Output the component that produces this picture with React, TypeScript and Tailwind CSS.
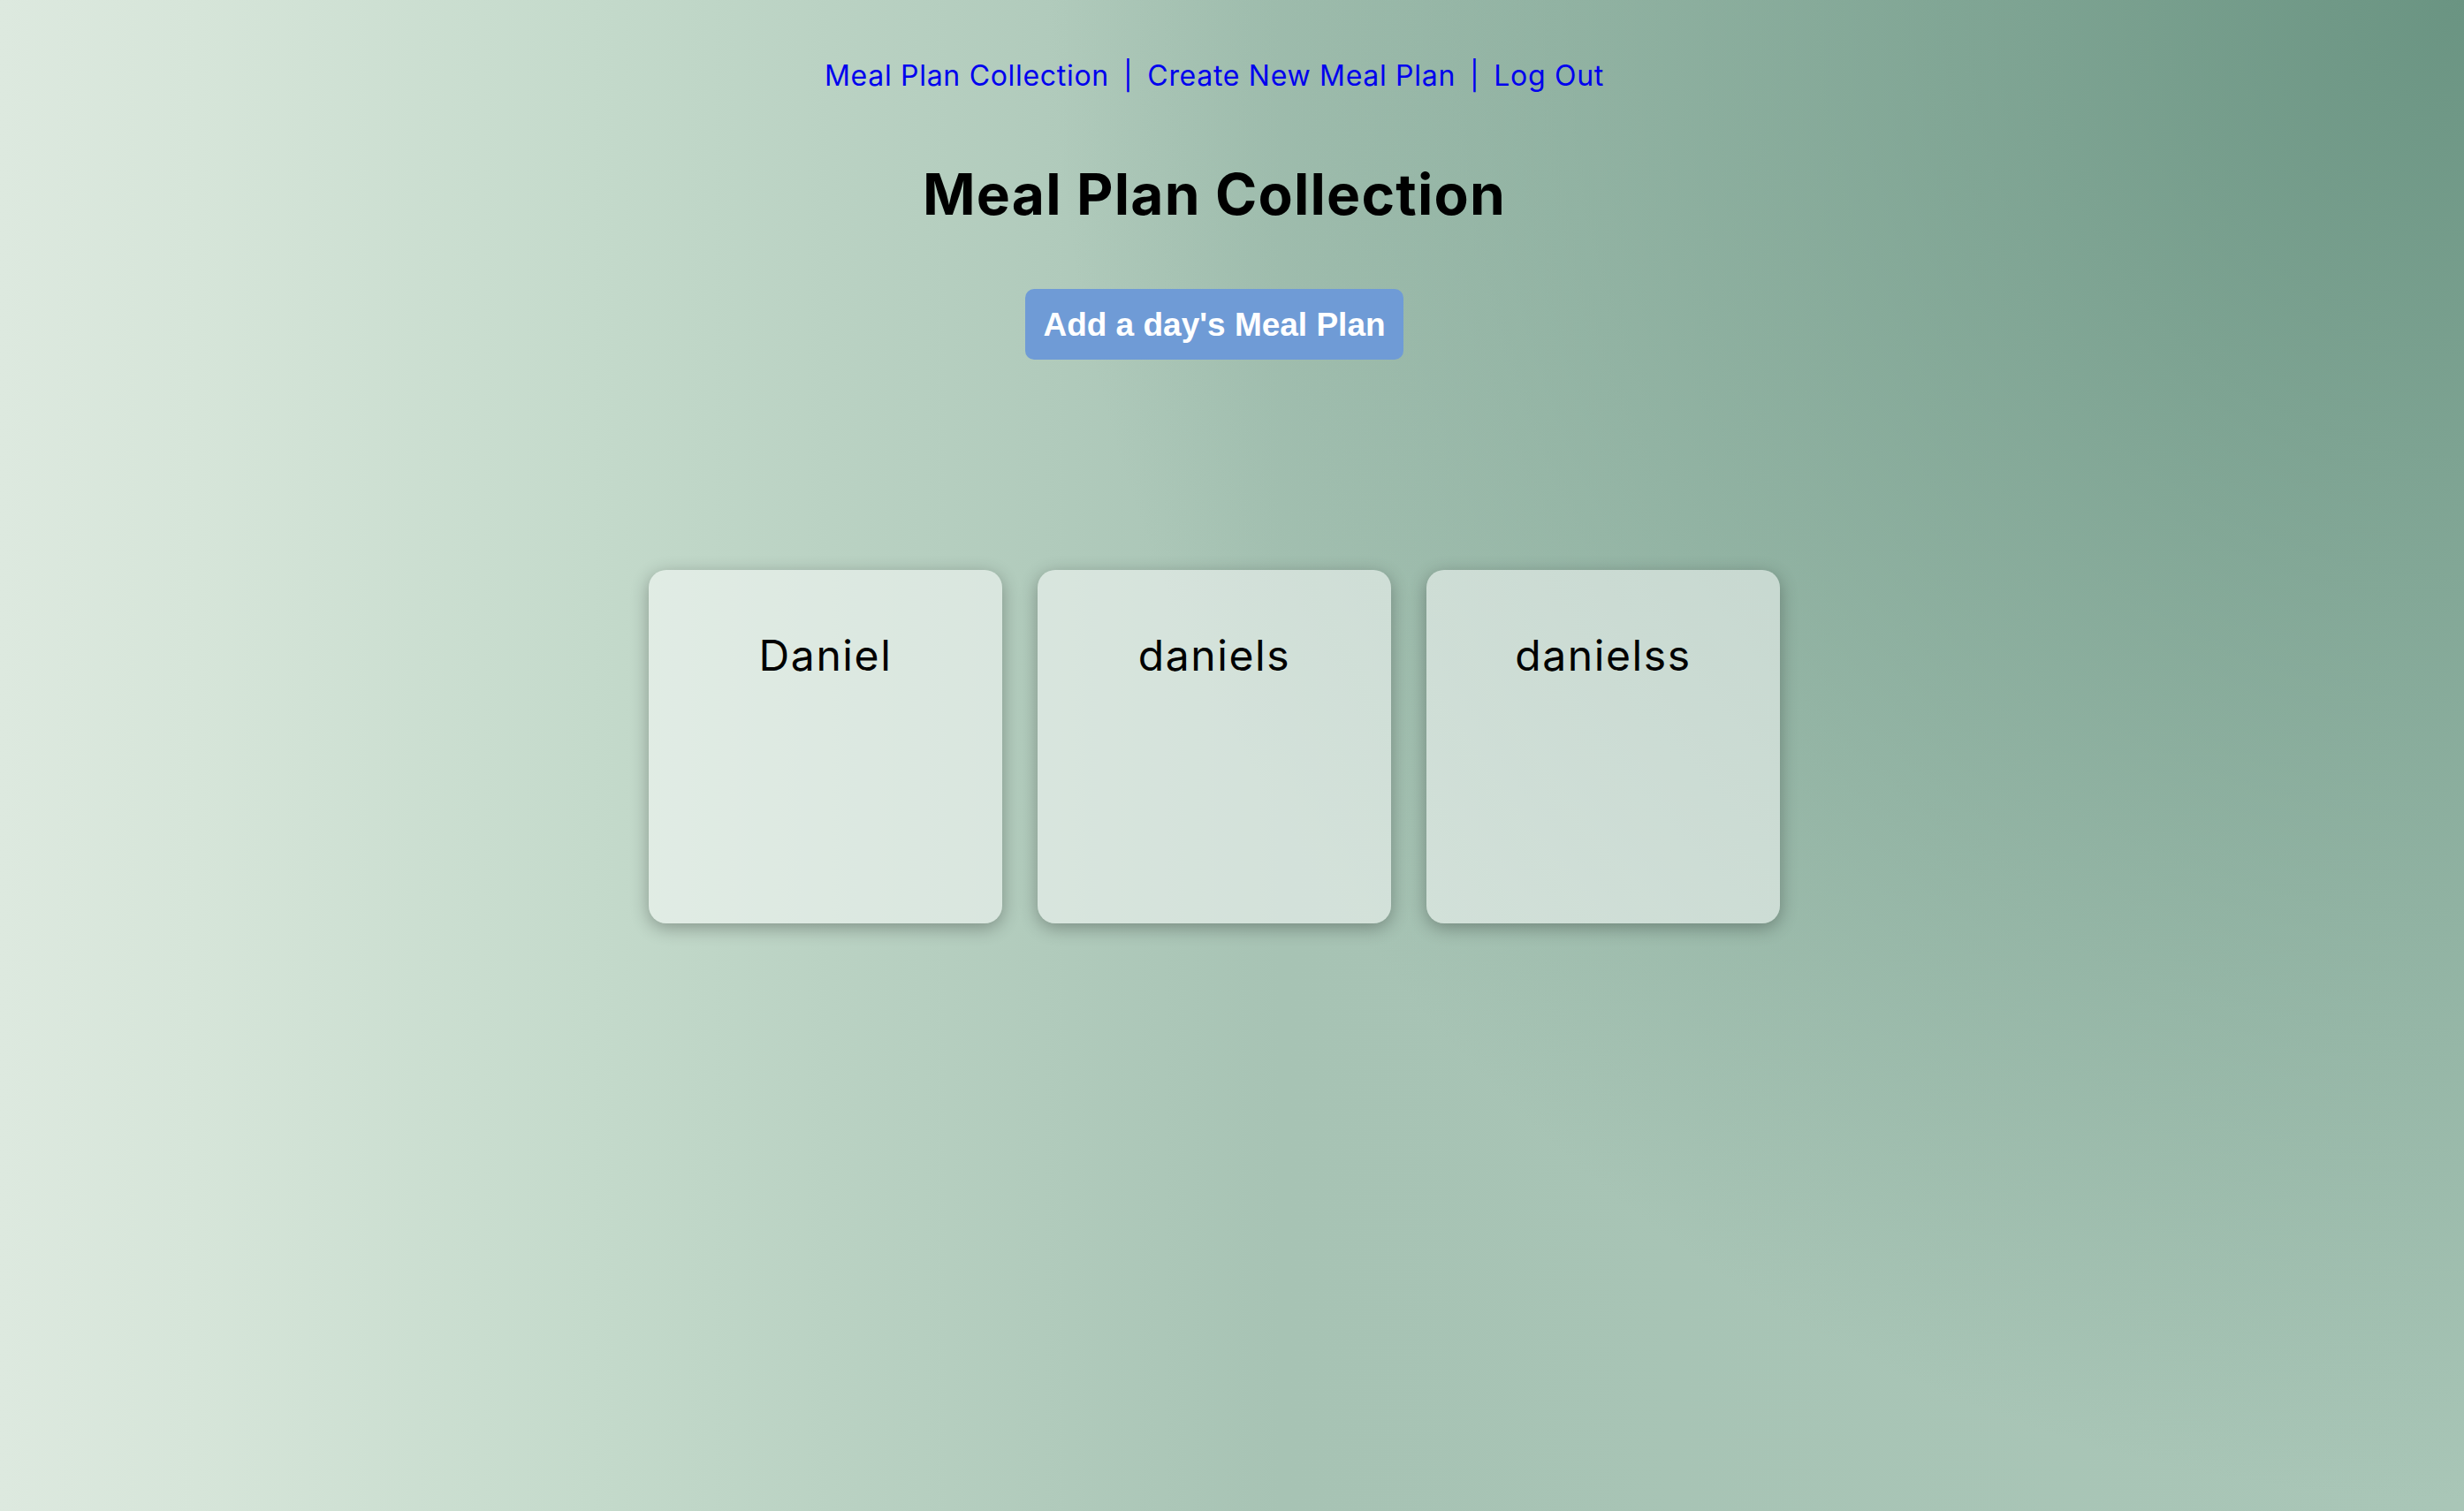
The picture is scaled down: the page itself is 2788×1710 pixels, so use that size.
import React from "react";

const plans = ["Daniel", "daniels", "danielss"];

const NavLink: React.FC<{ label: string }> = ({ label }) => (
  <a href="#" className="text-[#0000ee] no-underline">
    {label}
  </a>
);

export default function App() {
  return (
    <div className="min-h-screen w-full bg-[radial-gradient(ellipse_1600px_1700px_at_100%_0%,#6a9482_0%,#6a948200_100%),linear-gradient(to_right,#dde9df_0%,#d6e5d9_8%,#c4dacb_24%,#a7c3b4_52%,#a9c6b7_100%)] font-['Inter','Noto_Sans',sans-serif] text-black">
      <div className="flex flex-col items-center pt-[66px] pr-[40px]">
        {/* Top navigation */}
        <nav className="flex items-center gap-[16px] text-[32px] leading-[39px] tracking-[0.7px]">
          <NavLink label="Meal Plan Collection" />
          <span className="text-[#0000ee]">|</span>
          <NavLink label="Create New Meal Plan" />
          <span className="text-[#0000ee]">|</span>
          <NavLink label="Log Out" />
        </nav>

        <h1 className="mt-[76px] text-[64px] leading-[77px] font-bold tracking-[1.2px]">Meal Plan Collection</h1>

        <button className="mt-[69px] h-[80px] px-[20px] rounded-[10px] bg-[#6f9bd6] text-white font-['Liberation_Sans',Arial,sans-serif] font-bold text-[37px] leading-none">
          Add a day's Meal Plan
        </button>

        {/* Plan cards */}
        <div className="mt-[238px] flex gap-[40px]">
          {plans.map((name) => (
            <div
              key={name}
              className="w-[400px] h-[400px] rounded-[20px] bg-white/50 shadow-[0_5px_20px_rgba(0,0,0,0.3)] flex justify-center pt-[68px]"
            >
              <span className="text-[48px] leading-[58px] tracking-[1.6px]">{name}</span>
            </div>
          ))}
        </div>
      </div>
    </div>
  );
}
